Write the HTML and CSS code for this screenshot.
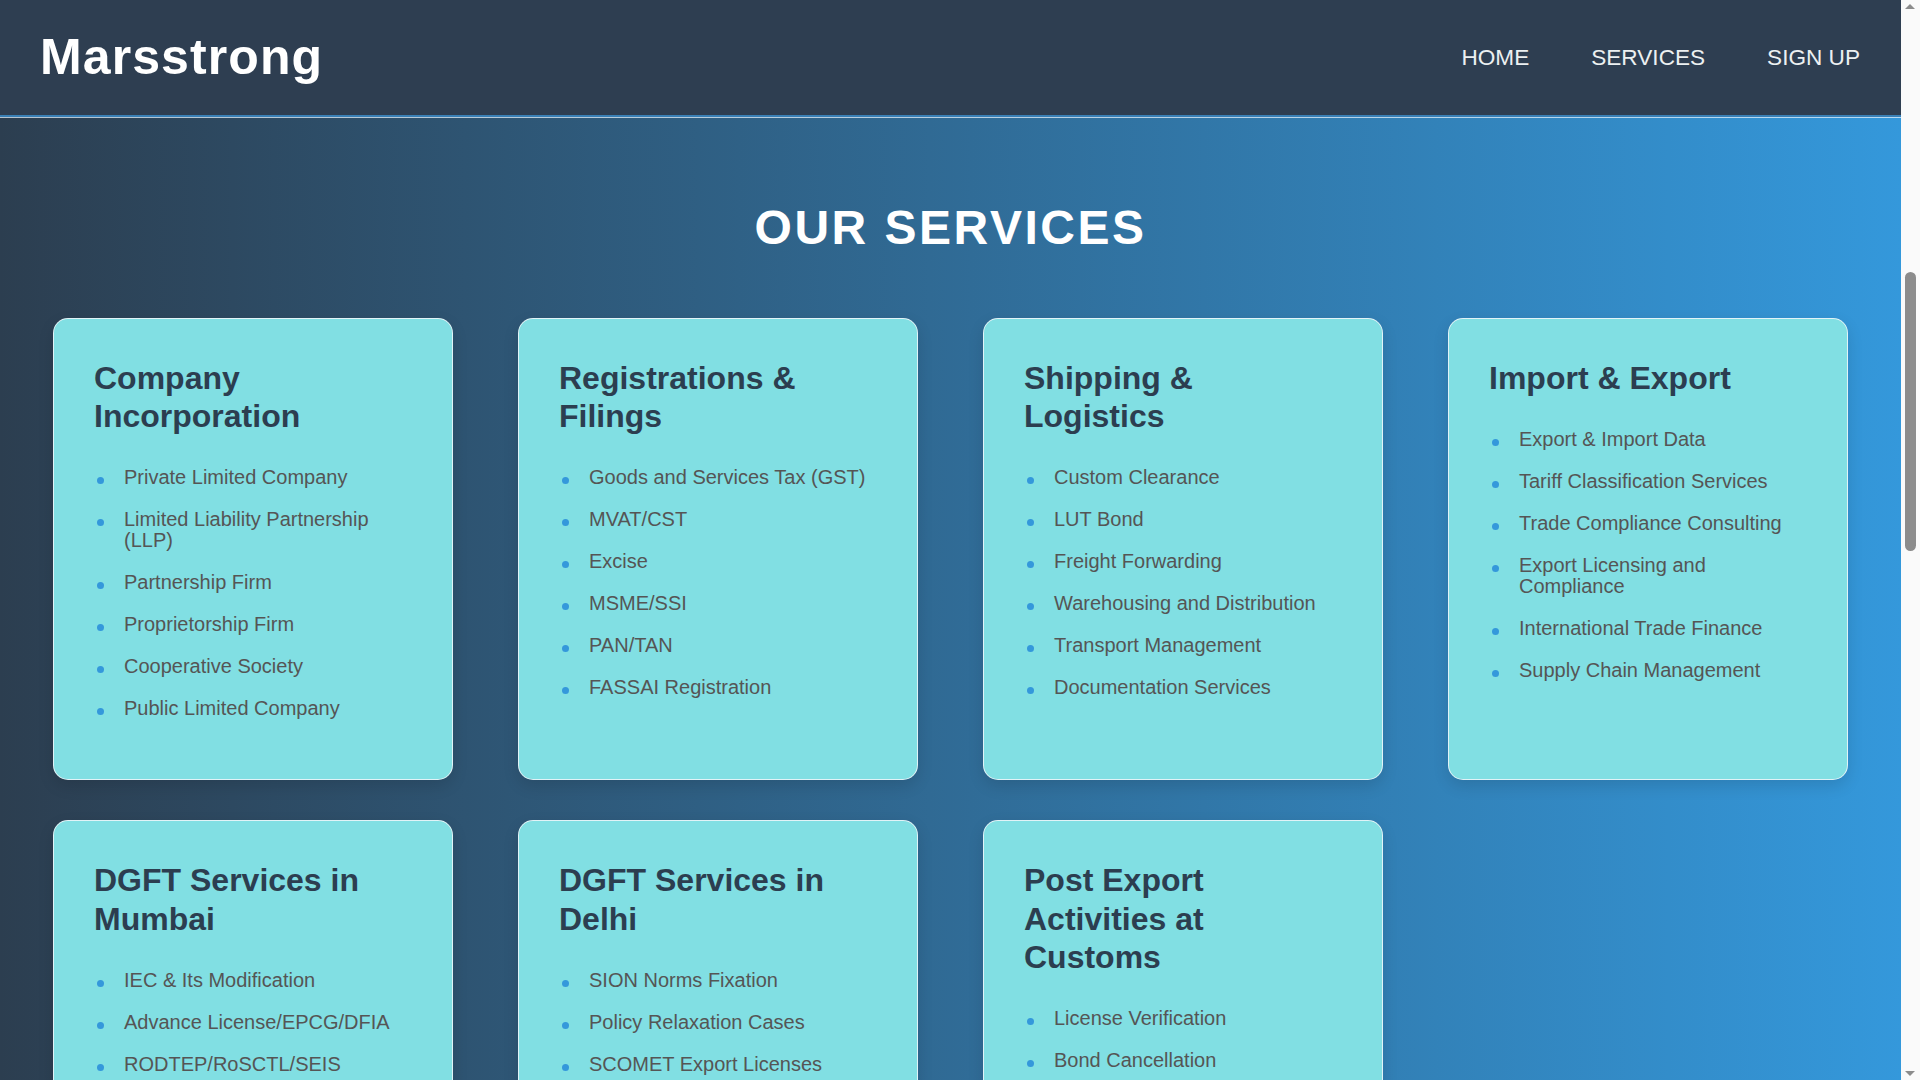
FILE: index.html
```html
<!DOCTYPE html>
<html lang="en">
<head>
<meta charset="utf-8">
<title>Marsstrong - Our Services</title>
<link rel="stylesheet" href="styles.css">
</head>
<body>
<div class="page">
  <header class="site-header">
    <div class="logo">Marsstrong</div>
    <nav class="nav">
      <a href="#" class="nav-link">HOME</a>
      <a href="#" class="nav-link">SERVICES</a>
      <a href="#" class="nav-link">SIGN UP</a>
    </nav>
  </header>
  <main class="services">
    <h2 class="services-title">OUR SERVICES</h2>
    <div class="grid">
      <section class="card">
        <h3 class="card-title">Company Incorporation</h3>
        <ul class="card-list">
          <li>Private Limited Company</li>
          <li>Limited Liability Partnership (LLP)</li>
          <li>Partnership Firm</li>
          <li>Proprietorship Firm</li>
          <li>Cooperative Society</li>
          <li>Public Limited Company</li>
        </ul>
      </section>
      <section class="card">
        <h3 class="card-title">Registrations &amp; Filings</h3>
        <ul class="card-list">
          <li>Goods and Services Tax (GST)</li>
          <li>MVAT/CST</li>
          <li>Excise</li>
          <li>MSME/SSI</li>
          <li>PAN/TAN</li>
          <li>FASSAI Registration</li>
        </ul>
      </section>
      <section class="card">
        <h3 class="card-title">Shipping &amp; Logistics</h3>
        <ul class="card-list">
          <li>Custom Clearance</li>
          <li>LUT Bond</li>
          <li>Freight Forwarding</li>
          <li>Warehousing and Distribution</li>
          <li>Transport Management</li>
          <li>Documentation Services</li>
        </ul>
      </section>
      <section class="card">
        <h3 class="card-title">Import &amp; Export</h3>
        <ul class="card-list">
          <li>Export &amp; Import Data</li>
          <li>Tariff Classification Services</li>
          <li>Trade Compliance Consulting</li>
          <li>Export Licensing and Compliance</li>
          <li>International Trade Finance</li>
          <li>Supply Chain Management</li>
        </ul>
      </section>
      <section class="card">
        <h3 class="card-title">DGFT Services in Mumbai</h3>
        <ul class="card-list">
          <li>IEC &amp; Its Modification</li>
          <li>Advance License/EPCG/DFIA</li>
          <li>RODTEP/RoSCTL/SEIS</li>
          <li>Status Holder Certificate</li>
          <li>EODC &amp; Redemption</li>
        </ul>
      </section>
      <section class="card">
        <h3 class="card-title">DGFT Services in Delhi</h3>
        <ul class="card-list">
          <li>SION Norms Fixation</li>
          <li>Policy Relaxation Cases</li>
          <li>SCOMET Export Licenses</li>
          <li>Import Authorisation</li>
          <li>Quality Complaints</li>
        </ul>
      </section>
      <section class="card">
        <h3 class="card-title">Post Export Activities at Customs</h3>
        <ul class="card-list">
          <li>License Verification</li>
          <li>Bond Cancellation</li>
          <li>Drawback Claims</li>
          <li>Shipping Bill Amendment</li>
        </ul>
      </section>
    </div>
  </main>
</div>
<div class="scrollbar" aria-hidden="true">
  <span class="scroll-arrow scroll-arrow-up"></span>
  <span class="scroll-thumb"></span>
  <span class="scroll-arrow scroll-arrow-down"></span>
</div>
</body>
</html>
```
FILE: styles.css
```css
* {
  box-sizing: border-box;
}

body {
  margin: 0;
  font-family: "Liberation Sans", Arial, Helvetica, sans-serif;
  background: #fafafa;
}

.page {
  margin-right: 19px;
  background: #2c3e50;
}

.site-header {
  height: 117px;
  padding: 0 41px 0 40px;
  display: flex;
  align-items: center;
  justify-content: space-between;
  background: #2e3e51;
  border-bottom: 2px solid #3a80b6;
  box-shadow: 0 1px 0 rgba(230, 240, 248, 0.75);
  position: relative;
  z-index: 1;
}

.logo {
  color: #ffffff;
  font-size: 50px;
  font-weight: 700;
  letter-spacing: 1.1px;
  line-height: 1;
  margin-top: -2px;
}

.nav {
  display: flex;
  gap: 62px;
}

.nav-link {
  color: #ecf0f1;
  font-size: 22.6px;
  text-decoration: none;
}

.services {
  min-height: 1500px;
  padding: 83px 53px 80px;
  background: linear-gradient(90deg, #2c3e50 0%, #3498db 100%);
}

.services-title {
  margin: 0 0 63px;
  text-align: center;
  color: #ffffff;
  font-size: 48px;
  font-weight: 700;
  letter-spacing: 2.5px;
  line-height: normal;
}

.grid {
  display: grid;
  grid-template-columns: repeat(4, 400px);
  justify-content: center;
  gap: 40px 65px;
}

.card {
  background: #81dfe3;
  border: 1px solid rgba(235, 245, 248, 0.9);
  border-radius: 15px;
  padding: 40px 40px 42px;
  box-shadow: 0 6px 16px rgba(0, 0, 0, 0.12);
}

.card-title {
  margin: 0 0 21px;
  color: #2c3e50;
  font-size: 32px;
  font-weight: 700;
  line-height: 1.2;
}

.card-list {
  list-style: none;
  margin: 0 0 7.5px;
  padding: 0;
}

.card-list li {
  position: relative;
  padding: 10.5px 0 10.5px 30px;
  color: #555555;
  font-size: 20px;
  line-height: 21px;
}

.card-list li::before {
  content: "";
  position: absolute;
  left: 3px;
  top: 20.5px;
  width: 7px;
  height: 7px;
  border-radius: 50%;
  background: #3498db;
}

.scrollbar {
  position: fixed;
  top: 0;
  right: 0;
  width: 19px;
  height: 100vh;
  background: #fafafa;
  z-index: 10;
}

.scroll-thumb {
  position: absolute;
  left: 4px;
  top: 272px;
  width: 11px;
  height: 279px;
  border-radius: 6px;
  background: #8c8c8c;
}

.scroll-arrow {
  position: absolute;
  left: 4px;
  width: 0;
  height: 0;
  border-left: 5.5px solid transparent;
  border-right: 5.5px solid transparent;
}

.scroll-arrow-up {
  top: 4px;
  border-bottom: 5px solid #8c8c8c;
}

.scroll-arrow-down {
  bottom: 4px;
  border-top: 5px solid #8c8c8c;
}
```
